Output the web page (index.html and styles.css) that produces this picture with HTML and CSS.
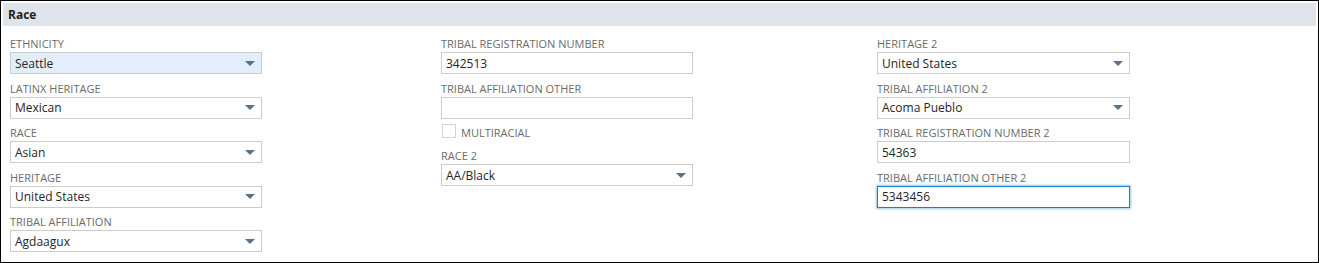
FILE: index.html
```html
<!DOCTYPE html>
<html lang="en">
<head>
    <meta charset="UTF-8">
    <title>Race</title>
    <link rel="stylesheet" href="styles.css">
</head>
<body>
    <div class="panel">
        <div class="panel-header">Race</div>
        <div class="panel-body">
            <div class="column">
                <div class="field">
                    <label>Ethnicity</label>
                    <div class="dropdown highlighted">
                        <span class="value">Seattle</span>
                        <span class="arrow"></span>
                    </div>
                </div>
                <div class="field">
                    <label>LatinX Heritage</label>
                    <div class="dropdown">
                        <span class="value">Mexican</span>
                        <span class="arrow"></span>
                    </div>
                </div>
                <div class="field">
                    <label>Race</label>
                    <div class="dropdown">
                        <span class="value">Asian</span>
                        <span class="arrow"></span>
                    </div>
                </div>
                <div class="field">
                    <label>Heritage</label>
                    <div class="dropdown">
                        <span class="value">United States</span>
                        <span class="arrow"></span>
                    </div>
                </div>
                <div class="field">
                    <label>Tribal Affiliation</label>
                    <div class="dropdown">
                        <span class="value">Agdaagux</span>
                        <span class="arrow"></span>
                    </div>
                </div>
            </div>

            <div class="column">
                <div class="field">
                    <label for="tribalReg">Tribal Registration Number</label>
                    <input type="text" id="tribalReg" value="342513">
                </div>
                <div class="field">
                    <label for="tribalOther">Tribal Affiliation Other</label>
                    <input type="text" id="tribalOther" value="">
                </div>
                <div class="checkbox-row">
                    <span class="checkbox"></span>
                    <span class="checkbox-label">Multiracial</span>
                </div>
                <div class="field">
                    <label>Race 2</label>
                    <div class="dropdown">
                        <span class="value">AA/Black</span>
                        <span class="arrow"></span>
                    </div>
                </div>
            </div>

            <div class="column wide">
                <div class="field">
                    <label>Heritage 2</label>
                    <div class="dropdown">
                        <span class="value">United States</span>
                        <span class="arrow"></span>
                    </div>
                </div>
                <div class="field">
                    <label>Tribal Affiliation 2</label>
                    <div class="dropdown">
                        <span class="value">Acoma Pueblo</span>
                        <span class="arrow"></span>
                    </div>
                </div>
                <div class="field">
                    <label for="tribalReg2">Tribal Registration Number 2</label>
                    <input type="text" id="tribalReg2" value="54363">
                </div>
                <div class="field">
                    <label for="tribalOther2">Tribal Affiliation Other 2</label>
                    <input type="text" id="tribalOther2" class="focused" value="5343456">
                </div>
            </div>
        </div>
    </div>
</body>
</html>
```

FILE: styles.css
```css
:root {
    --header-bg: #dfe4eb;
    --label-color: #6b6b6b;
    --text-color: #262626;
    --border-color: #cccccc;
    --arrow-color: #5b7089;
    --focus-color: #1482c8;
}

body {
    margin: 0;
    background-color: #ffffff;
    font-family: 'Open Sans', sans-serif;
}

.panel {
    height: 263px;
    box-sizing: border-box;
    border: 1px solid #000000;
    padding: 2px;
}

.panel-header {
    height: 23px;
    line-height: 23px;
    padding-left: 5px;
    background-color: var(--header-bg);
    color: #222222;
    font-size: 12px;
    font-weight: bold;
}

.panel-body {
    display: grid;
    grid-template-columns: 431px 436px 1fr;
    padding: 4px 0 0 7px;
}

.column {
    display: flex;
    flex-direction: column;
}

.field {
    padding-top: 7.5px;
}

.field:first-child {
    padding-top: 7px;
}

label {
    display: block;
    height: 14px;
    line-height: 14px;
    margin-bottom: 1px;
    color: var(--label-color);
    font-size: 11px;
    text-transform: uppercase;
}

.dropdown,
input {
    display: flex;
    align-items: center;
    width: 252px;
    height: 22px;
    box-sizing: border-box;
    margin: 0;
    padding: 0 4px;
    border: 1px solid var(--border-color);
    background-color: #ffffff;
    color: var(--text-color);
    font-family: 'Open Sans', sans-serif;
    font-size: 12px;
}

.wide .dropdown,
.wide input {
    width: 253px;
}

input:focus {
    outline: none;
}

.dropdown.highlighted {
    background-color: #e3eefb;
}

.dropdown .value {
    flex: 1;
}

.arrow {
    width: 0;
    height: 0;
    margin-right: 2px;
    border-left: 5px solid transparent;
    border-right: 5px solid transparent;
    border-top: 5px solid var(--arrow-color);
}

input.focused {
    border-color: var(--focus-color);
    box-shadow: 0 0 2px 1px rgba(20, 130, 200, 0.45);
}

.checkbox-row {
    display: flex;
    align-items: center;
    height: 23px;
    padding-top: 1px;
    box-sizing: border-box;
}

.checkbox {
    width: 14px;
    height: 14px;
    box-sizing: border-box;
    margin-left: 1px;
    border: 1px solid #d4d4d4;
    background-color: #ffffff;
}

.checkbox-label {
    margin-left: 5px;
    padding-top: 4px;
    color: var(--label-color);
    font-size: 11px;
    text-transform: uppercase;
}
```
